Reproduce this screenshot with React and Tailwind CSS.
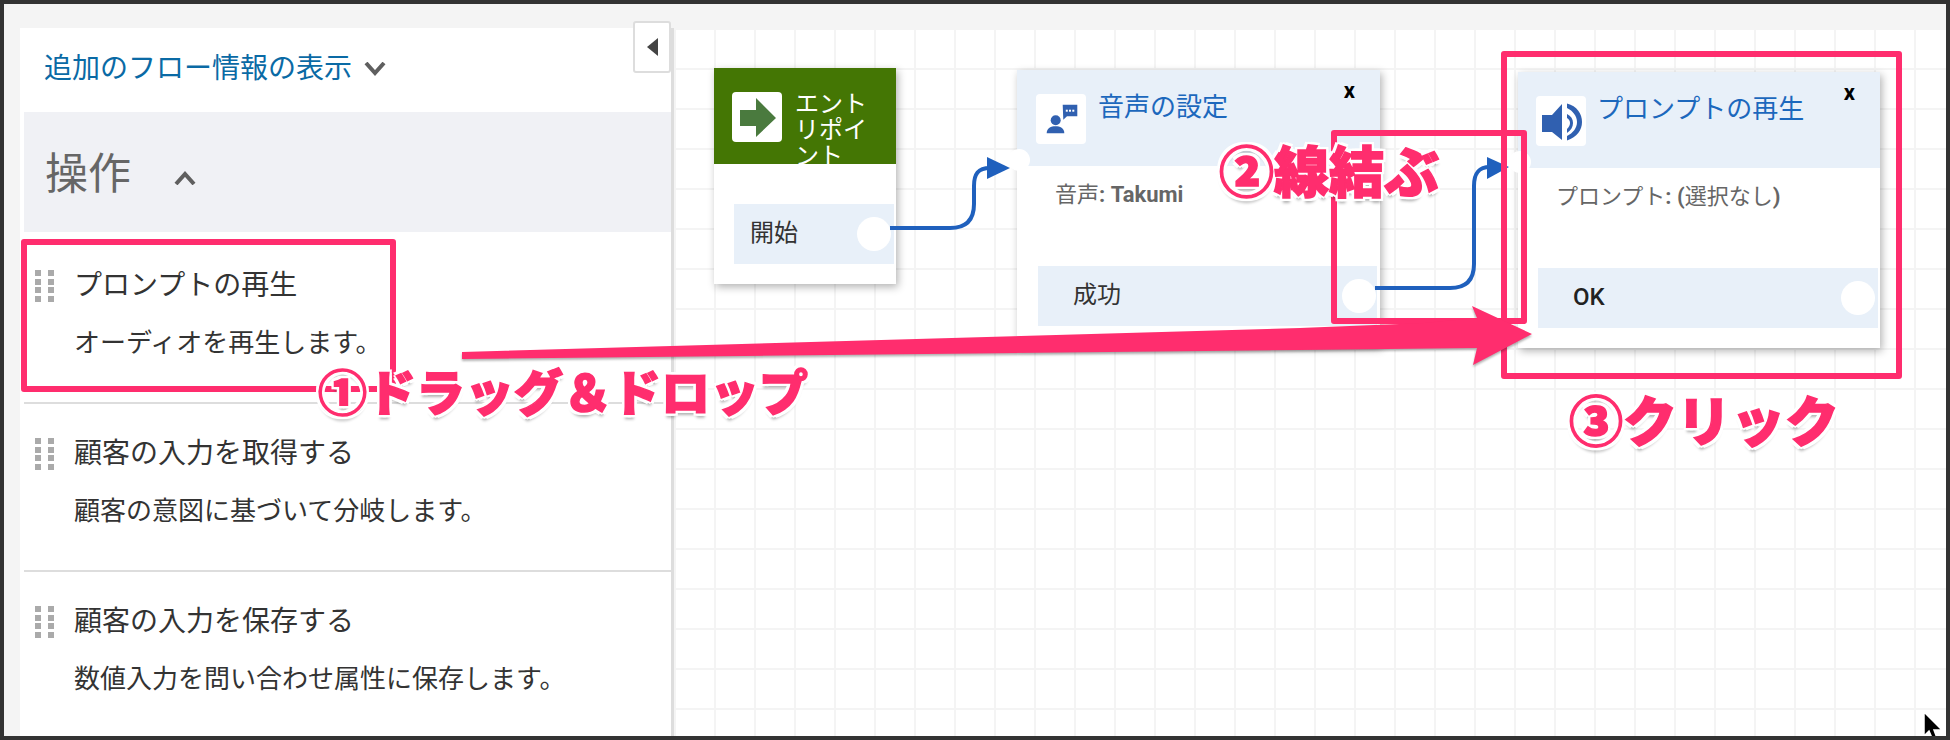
const items = [
  { title: "プロンプトの再生", desc: "オーディオを再生します。" },
  { title: "顧客の入力を取得する", desc: "顧客の意図に基づいて分岐します。" },
  { title: "顧客の入力を保存する", desc: "数値入力を問い合わせ属性に保存します。" },
];

function Chevron({ up }) {
  return (
    <svg width="22" height="14" viewBox="0 0 22 14" fill="none" stroke="#5f5f5f" strokeWidth="4">
      <path d={up ? "M2 13 L11 3 L20 13" : "M2 1 L11 11 L20 1"} />
    </svg>
  );
}

function DragDots() {
  return (
    <div className="grid grid-cols-2 gap-x-[6px] gap-y-[2.5px] w-[19px] shrink-0 self-start">
      {[0, 1, 2, 3, 4, 5, 6, 7].map(i => <div key={i} className="w-[6px] h-[6px] bg-[#aaaaaa]"></div>)}
    </div>
  );
}

function Sidebar() {
  return (
    <div className="w-[654px] shrink-0 bg-white border-r-[3px] border-[#dddddd] ml-4 mt-6">
      <div className="h-[84px] flex items-center pl-[24px] gap-3 pb-[2px]">
        <span className="text-[28px] leading-[34px] text-[#0a6aa5]">追加のフロー情報の表示</span>
        <Chevron />
      </div>
      <div className="ml-1 h-[120px] bg-[#f0f1f5] flex items-center pl-[21px] gap-[43px]">
        <span className="text-[43px] leading-[50px] text-[#666666] mt-1">操作</span>
        <div className="mt-3"><Chevron up /></div>
      </div>
      <div className="ml-1 pt-1">
        {items.map(it => (
          <div key={it.title} className="flex gap-[20px] pl-[11px] pt-[34px] h-[168px] border-b-2 border-[#dddddd] last:border-b-0">
            <DragDots />
            <div className="pt-[1px]">
              <div className="text-[28px] leading-[30px] text-[#333333]">{it.title}</div>
              <div className="text-[26px] leading-[30px] text-[#333333] mt-[27px]">{it.desc}</div>
            </div>
          </div>
        ))}
      </div>
    </div>
  );
}

function PersonIcon() {
  return (
    <svg width="50" height="50" viewBox="0 0 50 50" fill="#3060b0">
      <circle cx="19.7" cy="26.3" r="5" />
      <path d="M10.7 39.3 C10.7 34 15 32.3 19.5 32.3 C24 32.3 28.3 34 28.3 39.3 Z" />
      <path d="M26.7 10.7 H41.3 V22.3 H31 L27.3 25.7 Z" />
      <rect x="29.8" y="15.7" width="2" height="2" fill="#fff" />
      <rect x="33" y="15.7" width="2" height="2" fill="#fff" />
      <rect x="36.3" y="15.7" width="2" height="2" fill="#fff" />
    </svg>
  );
}

function SpeakerIcon() {
  return (
    <svg width="50" height="50" viewBox="0 0 50 50" fill="#3060b0">
      <path d="M6 19 H16 L26 8 V44 L16 36 H6 Z" />
      <path d="M31 7.5 C41 10 46 18 46 26 C46 34 41 41 31 44.5 V40 C37 37 41 32 41 26 C41 20 37 15 31 12 Z" />
      <path d="M31 18 C35 20 37 23 37 27 C37 31 35 34 31 37 V33 C33 31 34 29 34 27 C34 25 33 23 31 22 Z" />
    </svg>
  );
}

function EntryNode() {
  return (
    <div className="absolute left-[40px] top-[40px] w-[182px] h-[216px] bg-white shadow-[2px_3px_8px_rgba(0,0,0,0.3)]">
      <div className="h-[96px] bg-[#447604] overflow-hidden flex items-start pl-[18px] pt-[24px] gap-[13px]">
        <div className="w-[50px] h-[50px] bg-white rounded shrink-0">
          <svg width="50" height="50" viewBox="0 0 50 50" fill="#4a7a3e">
            <path d="M8 18 H24 V6 L44 26 L24 45 V34 H8 Z" />
          </svg>
        </div>
        <div className="w-[76px] text-[24px] leading-[26px] text-white -mt-[1px]">エントリポイント</div>
      </div>
      <div className="ml-5 mr-[2px] mt-10 h-[60px] bg-[#e8f0f9] flex items-center justify-between pl-[16px] pr-[3px]">
        <span className="text-[24px] text-[#333333] -mt-[3px]">開始</span>
        <div className="w-[34px] h-[34px] rounded-full bg-white"></div>
      </div>
    </div>
  );
}

function FlowNode({ className, headerClass, icon, title, titleClass, children, row, rowClass, boldRow }) {
  return (
    <div className={`absolute h-[276px] bg-white shadow-[2px_3px_8px_rgba(0,0,0,0.3)] ${className}`}>
      <div className={`h-[96px] bg-[#e8f0f9] flex items-start pr-[25px] ${headerClass}`}>
        <div className="w-[50px] h-[50px] bg-white rounded mt-[24px] shrink-0">{icon}</div>
        <div className={`mt-[22px] text-[26px] leading-[30px] text-[#1c68bd] ${titleClass}`}>{title}</div>
        <div className="ml-auto mt-[9px] text-[22px] leading-[24px] font-bold text-black">x</div>
      </div>
      <div className="absolute left-[-9px] top-[79px] w-[22px] h-[22px] rounded-full bg-white"></div>
      <div className="pl-[38px] mt-[16px] h-[26px] text-[22px] leading-[26px] text-[#666666]">{children}</div>
      <div className={`mt-[58px] h-[60px] bg-[#e8f0f9] flex items-center justify-between pl-[35px] ${rowClass}`}>
        <span className={`text-[24px] -mt-[2px] ${boldRow ? "font-medium text-[#222222]" : "text-[#333333]"}`}>{row}</span>
        <div className="w-[34px] h-[34px] rounded-full bg-white"></div>
      </div>
    </div>
  );
}

function Connectors() {
  return (
    <svg className="absolute left-0 top-0" width="1272" height="708" viewBox="674 28 1272 708" fill="none">
      <path d="M890 228 H950 C966 228 974 220 974 204 V186 C974 174 978 168 990 168" stroke="#1f60bd" strokeWidth="4" />
      <path d="M987 157 L1010 168 L987 179 Z" fill="#1f60bd" />
      <path d="M1375 288 H1450 C1466 288 1474 280 1474 264 V186 C1474 174 1478 167 1490 167" stroke="#1f60bd" strokeWidth="4" />
      <path d="M1487 157 L1509 167 L1487 179 Z" fill="#1f60bd" />
    </svg>
  );
}

function Cursor() {
  return (
    <svg className="absolute left-[1248px] top-[682px]" width="24" height="30" viewBox="0 0 24 30">
      <path d="M2 2 V26 L7 21 L10 28 L15 28 L12 20 L20 20 Z" fill="#000" stroke="#fff" strokeWidth="1.5" />
    </svg>
  );
}

function Canvas() {
  return (
    <div className="relative flex-1 mt-6 overflow-hidden bg-white bg-[linear-gradient(to_right,#f4f4f4_2px,transparent_2px),linear-gradient(to_bottom,#f4f4f4_2px,transparent_2px)] bg-[size:40px_40px]">
      <EntryNode />
      <FlowNode className="left-[343px] top-[42px] w-[363px]" headerClass="pl-[19px]" icon={<PersonIcon />} title="音声の設定" titleClass="ml-[12px]" row="成功" rowClass="ml-[21px] mr-[3px] pr-[1px]">
        音声<b>: Takumi</b>
      </FlowNode>
      <FlowNode className="left-[844px] top-[44px] w-[362px]" headerClass="pl-[18px]" icon={<SpeakerIcon />} title="プロンプトの再生" titleClass="ml-[11px]" row="OK" rowClass="ml-[20px] mr-[2px] pr-[3px]" boldRow>
        プロンプト<b>: (</b>選択なし<b>)</b>
      </FlowNode>
      <Connectors />
      <Cursor />
    </div>
  );
}

const labelClass = "absolute whitespace-nowrap font-black leading-none text-[#ff2d6e] [-webkit-text-stroke:1.5px_#ff2d6e] [text-shadow:3px_0_0_#fff,-3px_0_0_#fff,0_3px_0_#fff,0_-3px_0_#fff,3px_3px_0_#fff,-3px_3px_0_#fff,3px_-3px_0_#fff,-3px_-3px_0_#fff,0_5px_3px_rgba(0,0,0,0.3)]";

export default function App() {
  return (
    <div className="relative w-[1950px] h-[740px] bg-[#333333] p-1 overflow-hidden [font-family:Roboto,'Noto_Sans_CJK_JP',sans-serif]">
      <div className="flex h-full bg-[#f4f4f4]">
        <Sidebar />
        <Canvas />
      </div>

      {/* panel collapse tab */}
      <div className="absolute left-[633px] top-[21px] w-[38px] h-[52px] bg-white border-2 border-[#dddddd] rounded-[3px] flex items-center justify-center">
        <div className="w-0 h-0 border-y-[9px] border-y-transparent border-r-[11px] border-r-[#444444]"></div>
      </div>

      {/* annotations on top of the capture */}
      <div className="absolute left-[21px] top-[239px] w-[375px] h-[153px] border-[6px] border-[#ff2d6e] rounded-[3px]"></div>
      <div className="absolute left-[1331px] top-[130px] w-[196px] h-[194px] border-[6px] border-[#ff2d6e] rounded-[3px]"></div>
      <div className="absolute left-[1501px] top-[51px] w-[401px] h-[328px] border-[6px] border-[#ff2d6e] rounded-[3px]"></div>
      <svg className="absolute left-0 top-0 drop-shadow-[0_2px_1px_rgba(0,0,0,0.3)]" width="1950" height="740" viewBox="0 0 1950 740">
        <path d="M462 352 L1300 328 L1424 323 L1477 318 L1472 306 L1532 334 L1473 365 L1477 348 L1300 350 L462 359 Z" fill="#ff2d6e" />
      </svg>
      <span className={`${labelClass} left-[318px] top-[370px] text-[49px]`}>{"①ドラッグ\uFF06ドロップ"}</span>
      <span className={`${labelClass} left-[1219px] top-[146px] text-[55px]`}>②線結ぶ</span>
      <span className={`${labelClass} left-[1569px] top-[397px] text-[54px]`}>③クリック</span>
    </div>
  );
}
